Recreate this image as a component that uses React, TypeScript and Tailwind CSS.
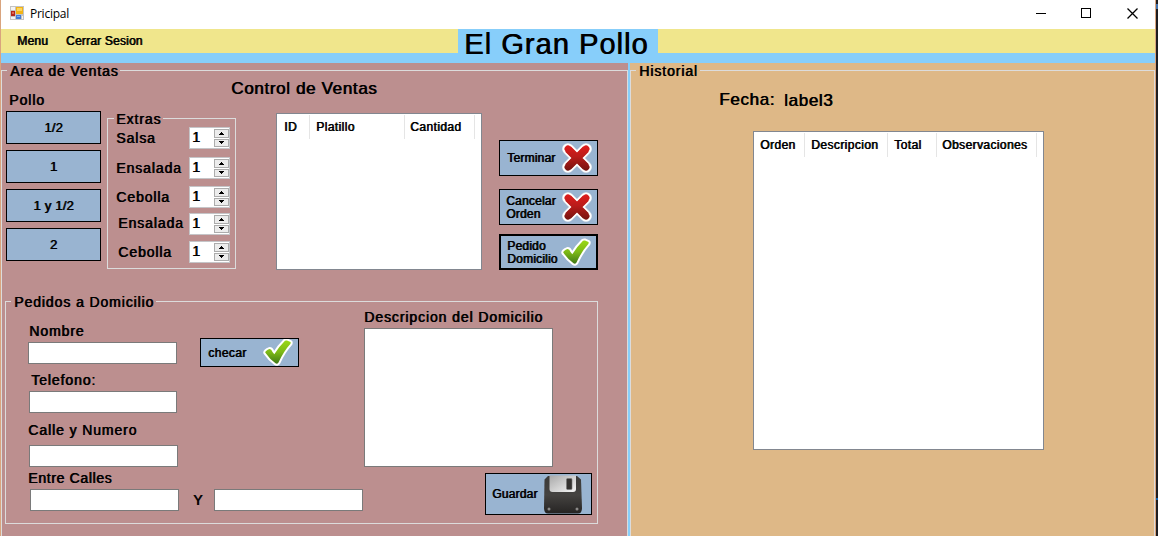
import type { ReactNode } from "react";

const shadow = "[text-shadow:0.7px_0_0_#000]";
const small = "text-[12px] leading-[13px] tracking-[0.2px] whitespace-nowrap [text-shadow:0.7px_0_0_#000]";
const label = "text-[14px] leading-[15px] tracking-[0.9px] whitespace-nowrap";
const large = "text-[17px] leading-5 tracking-[0.65px] whitespace-nowrap";

function CrossIcon() {
  const d = "M7 7 L23 23 M23 7 L7 23";
  return (
    <svg width="34" height="34" viewBox="0 0 30 30" className="-ml-px shrink-0">
      <defs>
        <linearGradient id="red" gradientUnits="userSpaceOnUse" x1="0" y1="3" x2="0" y2="27">
          <stop offset="0" stopColor="#e21c1c" />
          <stop offset="0.45" stopColor="#b91c1a" />
          <stop offset="1" stopColor="#70120f" />
        </linearGradient>
      </defs>
      <path d={d} stroke="#d6dbe2" strokeWidth="10.6" strokeLinecap="round" opacity="0.6" />
      <path d={d} stroke="#fff" strokeWidth="9.8" strokeLinecap="round" />
      <path d={d} stroke="url(#red)" strokeWidth="6.8" strokeLinecap="butt" />
      <path d={d} stroke="url(#red)" strokeWidth="6" strokeLinecap="round" />
    </svg>
  );
}

function CheckIcon() {
  const d = "M2.200 14.500 Q2.500 12.500 6.500 11 Q8.500 11 9.500 14 L11.300 16.300 Q16 8.500 22 2.700 Q23 2.200 24 2.500 L27.500 4 Q28 5 27.300 6 Q20.500 13.500 15.500 24.500 Q14 26.500 12.500 25.300 Q7 21.500 2.200 14.500 Z";
  return (
    <svg width="31" height="29" viewBox="0 0 31 29" className="shrink-0 overflow-visible">
      <defs>
        <linearGradient id="green" x1="0" y1="0" x2="0" y2="1">
          <stop offset="0" stopColor="#9ad816" />
          <stop offset="0.5" stopColor="#7db916" />
          <stop offset="1" stopColor="#3f7817" />
        </linearGradient>
      </defs>
      <path d={d} fill="#fff" stroke="#fff" strokeWidth="4" strokeLinejoin="round" />
      <path d={d} fill="url(#green)" />
    </svg>
  );
}

function FloppyIcon() {
  return (
    <svg width="38" height="39" viewBox="0 0 38 39" className="shrink-0">
      <defs>
        <linearGradient id="body" x1="0" y1="0" x2="0" y2="1">
          <stop offset="0" stopColor="#3b3a39" />
          <stop offset="0.5" stopColor="#454341" />
          <stop offset="1" stopColor="#262423" />
        </linearGradient>
        <linearGradient id="metal" x1="0" y1="0" x2="1" y2="1">
          <stop offset="0" stopColor="#a9a9a9" />
          <stop offset="0.5" stopColor="#cfcfcf" />
          <stop offset="1" stopColor="#f5f5f5" />
        </linearGradient>
      </defs>
      <path d="M4 1 H33 L37 4.500 L38 33 Q38 38.500 34 38.500 H4 Q0 38.500 0 33 L0.500 4.500Z" fill="url(#body)" />
      <path d="M5.500 0.500 H32 V14 Q32 17 29 17 H8.500 Q5.500 17 5.500 14Z" fill="url(#metal)" />
      <rect x="22.500" y="3.500" width="5.500" height="11" rx="1" fill="#343230" stroke="#777" strokeWidth="0.600" />
      <circle cx="5" cy="34" r="1.500" fill="#8b8988" />
      <circle cx="33" cy="34" r="1.500" fill="#8b8988" />
    </svg>
  );
}

function AppIcon() {
  return (
    <svg width="14" height="14" viewBox="0 0 14 14" shapeRendering="crispEdges">
      <rect width="14" height="14" fill="#c3c3c3" />
      <rect x="1" y="1" width="4" height="3" fill="#f4f4f4" />
      <rect x="1" y="11" width="4" height="2" fill="#f4f4f4" />
      <rect x="12" y="10" width="1" height="3" fill="#f4f4f4" />
      <rect x="1" y="5" width="4" height="5" fill="#b3271c" />
      <rect x="2" y="6" width="2" height="2" fill="#e0664e" />
      <rect x="6" y="1" width="7" height="7" fill="#f3b415" />
      <rect x="7" y="2" width="5" height="3" fill="#fbd661" />
      <rect x="6" y="9" width="5" height="4" fill="#3f7bd6" />
      <rect x="7" y="10" width="3" height="1" fill="#7eacf0" />
    </svg>
  );
}

function PolloButton({ children }: { children: ReactNode }) {
  return (
    <button className={`flex h-[33px] w-[95px] items-center justify-center border border-black bg-[#99b4d1] text-[13px] leading-4 tracking-[0.2px] ${shadow}`}>
      {children}
    </button>
  );
}

function Spinner() {
  return (
    <div className="flex h-[22px] w-[41px] border border-[#c5c5c8] bg-white">
      <span className="w-6 pt-[2px] pl-[2px] text-[14px] leading-[15px]">1</span>
      <div className="flex w-[15px] flex-col gap-px py-px">
        <div className="flex h-[9px] items-center justify-center border border-[#acacac] bg-[#ececec]">
          <svg width="5" height="3" shapeRendering="crispEdges"><path d="M2 0h1v1h1v1h1v1H0V2h1V1h1z" /></svg>
        </div>
        <div className="flex h-[9px] items-center justify-center border border-[#acacac] bg-[#ececec]">
          <svg width="5" height="3" shapeRendering="crispEdges"><path d="M0 0h5v1H4v1H3v1H2V2H1V1H0z" /></svg>
        </div>
      </div>
    </div>
  );
}

function ExtraRow({ name, className }: { name: string; className: string }) {
  return (
    <div className={`flex justify-between pr-[5px] ${className}`}>
      <span className={label}>{name}</span>
      <Spinner />
    </div>
  );
}

function Field({ className }: { className: string }) {
  return <input className={`block h-[22px] border border-[#7a7a7a] bg-white outline-none ${className}`} />;
}

function Column({ children, className }: { children: string; className: string }) {
  return <div className={`h-6 border-r border-[#e5e5e5] pt-[6px] ${small} ${className}`}>{children}</div>;
}

function Legend({ children, className }: { children: string; className: string }) {
  return (
    <legend className={`h-[15px] ${label} ${className}`}>
      <span className="block pt-px">{children}</span>
    </legend>
  );
}

export default function App() {
  return (
    <div className={`flex h-[536px] w-[1158px] overflow-hidden bg-[#1d1d20] font-['Liberation_Sans',Arial,sans-serif] text-black ${shadow}`}>
      <div className="flex w-[1156px] flex-col border-x border-[#d9a47e] bg-white">
        <header className="flex h-[29px] shrink-0 items-start pl-[9px]">
          <div className="pt-[6px]"><AppIcon /></div>
          <span className="pt-[6px] pl-[6px] font-['Open_Sans',sans-serif] text-[12px] leading-4 tracking-[-0.25px] [text-shadow:none]">Pricipal</span>
          <svg className="mt-2 mr-[16px] ml-auto" width="103" height="11" fill="none" stroke="#000" shapeRendering="crispEdges">
            <path d="M0 5.500H10M45.500 0.500h9v9h-9z" />
            <path d="M91.500 0.500l10 10M101.500 0.500l-10 10" shapeRendering="auto" strokeWidth="1.300" />
          </svg>
        </header>

        <div className="flex h-[34px] shrink-0 bg-[#87cefa]">
          <nav className="flex h-6 w-[457px] gap-[18px] bg-[#f0e68c] pt-[6px] pl-4">
            <span className={small}>Menu</span>
            <span className={small}>Cerrar Sesion</span>
          </nav>
          <h1 className="w-[200px] pl-[6px] text-[29px] leading-[30px] tracking-[1.05px] whitespace-nowrap">El Gran Pollo</h1>
          <div className="h-6 flex-1 bg-[#f0e68c]" />
        </div>

        <main className="flex h-[473px] bg-[#87cefa]">
          <section className="mr-[2px] w-[627px] shrink-0 bg-[#bc8f8f]">
            <fieldset className="h-[480px] border border-b-0 border-[#dcdcdc]">
              <Legend className="ml-[5px] pr-[2px] pl-[3px]">Area de Ventas</Legend>

              <div className="flex h-[216px] pl-1">
                <div className="mr-[6px] w-[95px] pt-[15px]">
                  <div className={`pl-[3px] ${label}`}>Pollo</div>
                  <div className="mt-[3px] flex flex-col gap-[6px]">
                    <PolloButton>1/2</PolloButton>
                    <PolloButton>1</PolloButton>
                    <PolloButton>1 y 1/2</PolloButton>
                    <PolloButton>2</PolloButton>
                  </div>
                </div>

                <div>
                  <h2 className={`h-[33px] pt-px pl-[124px] ${large}`}>Control de Ventas</h2>
                  <div className="flex items-start">
                    <fieldset className="h-[158px] w-[129px] border border-[#dcdcdc]">
                      <Legend className="ml-[6px] px-[2px]">Extras</Legend>
                      <ExtraRow name="Salsa" className="mt-px items-center pl-2" />
                      <ExtraRow name="Ensalada" className="mt-2 items-center pl-2" />
                      <ExtraRow name="Cebolla" className="mt-[7px] items-center pl-2" />
                      <ExtraRow name="Ensalada" className="mt-[5px] items-start pt-0 pl-[10px] [&>span]:pt-[3px]" />
                      <ExtraRow name="Cebolla" className="mt-[6px] items-center pl-[10px]" />
                    </fieldset>

                    <div className="mt-[2px] ml-10 flex h-[157px] w-[206px] border border-[#828790] bg-white pt-px">
                      <Column className="w-[33px] pl-[7px] tracking-[0.4px]">ID</Column>
                      <Column className="w-[95px] pl-[6px] tracking-[0.4px]">Platillo</Column>
                      <Column className="w-[70px] pl-[5px] tracking-[0.4px]">Cantidad</Column>
                    </div>

                    <div className="mt-[29px] ml-[17px] w-[99px] text-left">
                      <button className={`flex h-9 w-full items-center border border-black bg-[#99b4d1] pl-[7px] text-left ${small}`}>
                        <span className="w-[54px]">Terminar</span>
                        <CrossIcon />
                      </button>
                      <button className={`mt-[13px] flex h-9 w-full items-center border border-black bg-[#99b4d1] pl-[6px] text-left ${small}`}>
                        <span className="w-[55px] pt-px">Cancelar<br />Orden</span>
                        <CrossIcon />
                      </button>
                      <button className={`mt-[9px] flex h-9 w-full items-center border-2 border-black bg-[#99b4d1] pl-[6px] text-left ${small}`}>
                        <span className="w-[54px] pt-px">Pedido<br />Domicilio</span>
                        <CheckIcon />
                      </button>
                    </div>
                  </div>
                </div>
              </div>

              <fieldset className="ml-[3px] h-[230px] w-[593px] border border-[#dcdcdc]">
                <Legend className="ml-[5px] pr-[2px] pl-[3px]">Pedidos a Domicilio</Legend>
                <div className="flex">
                  <div className="w-[358px] pl-[22px]">
                    <div className="flex h-[64px]">
                      <div className="w-[172px] pt-[15px]">
                        <div className={`pl-px ${label}`}>Nombre</div>
                        <Field className="mt-[3px] w-[149px]" />
                      </div>
                      <button className={`mt-[29px] flex h-[29px] w-[99px] items-center overflow-hidden border border-black bg-[#99b4d1] pl-[7px] text-left ${small}`}>
                        <span className="w-[55px] pt-px tracking-[0.4px]">checar</span>
                        <CheckIcon />
                      </button>
                    </div>
                    <div className={`pl-[3px] ${label}`}>Telefono:</div>
                    <Field className="mt-[3px] ml-px w-[148px]" />
                    <div className={`mt-[10px] ${label} tracking-[0.7px]`}>Calle y Numero</div>
                    <Field className="mt-[7px] ml-px w-[149px]" />
                    <div className={`mt-[4px] ${label} tracking-[0.65px]`}>Entre Calles</div>
                    <div className="mt-[3px] ml-[2px] flex items-center">
                      <Field className="w-[149px]" />
                      <span className={`w-[35px] pl-[14px] ${label}`}>Y</span>
                      <Field className="w-[149px]" />
                    </div>
                  </div>
                  <div className="w-[228px]">
                    <div className={`pt-px ${label}`}>Descripcion del Domicilio</div>
                    <textarea className="mt-[3px] block h-[139px] w-[189px] resize-none border border-[#7a7a7a] bg-white outline-none" />
                    <button className={`mt-[6px] ml-auto flex h-[42px] w-[107px] items-center border border-black bg-[#99b4d1] pl-[6px] text-left ${small}`}>
                      <span className="w-[52px]">Guardar</span>
                      <FloppyIcon />
                    </button>
                  </div>
                </div>
              </fieldset>
            </fieldset>
          </section>

          <section className="flex-1 bg-[#deb887]">
            <fieldset className="h-[480px] border border-b-0 border-[#dcdcdc]">
              <Legend className="ml-[5px] pr-[2px] pl-[3px]">Historial</Legend>
              <div className="flex gap-[9px] pt-[12px] pl-[88px]">
                <span className={large}>Fecha:</span>
                <span className={`pt-px ${large}`}>label3</span>
              </div>
              <div className="mt-[20px] ml-[122px] flex h-[319px] w-[291px] border border-[#828790] bg-white pt-px">
                <Column className="w-[51px] pl-[6px] tracking-[0.4px]">Orden</Column>
                <Column className="w-[83px] pl-[6px] tracking-[0.4px]">Descripcion</Column>
                <Column className="w-[49px] pl-[6px] tracking-[0.4px]">Total</Column>
                <Column className="w-[100px] pl-[5px] tracking-[0.4px]">Observaciones</Column>
              </div>
            </fieldset>
          </section>
        </main>
      </div>
      <div className="flex w-[2px] flex-col">
        <div className="mt-1 h-[5px] bg-[#4272ab]" />
        <div className="mt-[489px] h-[2px] bg-[#0b62b5]" />
      </div>
    </div>
  );
}
